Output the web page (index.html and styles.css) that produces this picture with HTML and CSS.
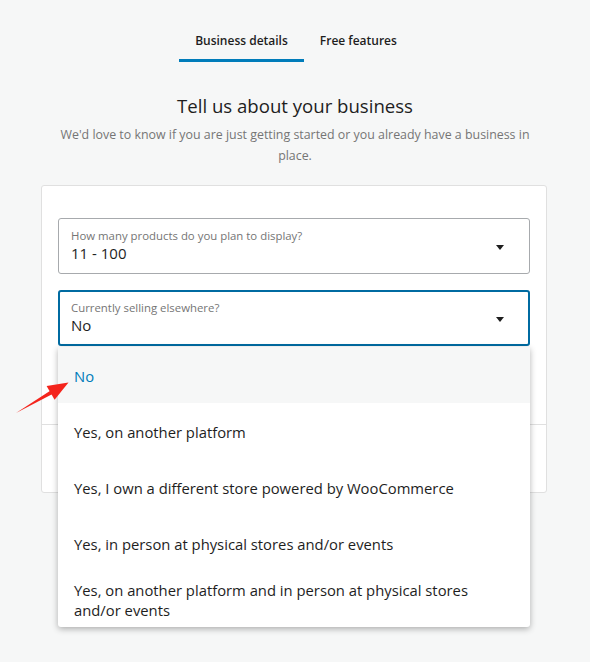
FILE: index.html
```
<!DOCTYPE html>
<html lang="en">
<head>
<meta charset="utf-8">
<title>Tell us about your business</title>
<link rel="stylesheet" href="styles.css">
</head>
<body>
<div class="page">
  <nav class="tabs">
    <div class="tab tab-active">Business details</div>
    <div class="tab">Free features</div>
  </nav>
  <h1 class="title">Tell us about your business</h1>
  <p class="subtitle">We'd love to know if you are just getting started or you already have a business in<br>place.</p>
  <div class="card">
    <div class="card-body">
      <div class="select">
        <div class="select-text">
          <div class="select-label">How many products do you plan to display?</div>
          <div class="select-value">11 - 100</div>
        </div>
        <span class="caret"></span>
      </div>
      <div class="select-wrap">
        <div class="select select-focused">
          <div class="select-text">
            <div class="select-label">Currently selling elsewhere?</div>
            <div class="select-value">No</div>
          </div>
          <span class="caret"></span>
        </div>
        <ul class="menu">
          <li class="option option-selected">No</li>
          <li class="option">Yes, on another platform</li>
          <li class="option">Yes, I own a different store powered by WooCommerce</li>
          <li class="option">Yes, in person at physical stores and/or events</li>
          <li class="option">Yes, on another platform and in person at physical stores and/or events</li>
        </ul>
      </div>
    </div>
    <div class="card-footer"></div>
  </div>
  <svg class="pointer" width="80" height="60" viewBox="0 0 80 60" aria-hidden="true">
    <path d="M16 53 L51 30.3 L53 33.7 Z" fill="#f4241c"/>
    <path d="M68.5 22.5 L46.6 26 L54.6 39.8 Z" fill="#f4241c"/>
  </svg>
</div>
</body>
</html>
```

FILE: styles.css
```
* { box-sizing: border-box; }
html, body { margin: 0; padding: 0; }
body {
  background: #f6f7f7;
  font-family: "Open Sans", "Noto Sans", sans-serif;
  color: #1e1e1e;
}
.page {
  position: relative;
  width: 590px;
  height: 662px;
  padding-top: 31px;
}
.tabs {
  display: flex;
  justify-content: center;
  padding-left: 2px;
}
.tab {
  padding: 0 16px 8px;
  font-size: 12px;
  line-height: 20px;
  font-weight: 600;
  color: #1e1e1e;
  border-bottom: 3px solid transparent;
}
.tab-active { border-bottom-color: #007cba; }
.title {
  margin: 30px 0 0;
  text-align: center;
  font-size: 18.6px;
  line-height: 28px;
  font-weight: 400;
  color: #1e1e1e;
}
.subtitle {
  margin: 4px 0 0;
  text-align: center;
  font-size: 12.4px;
  line-height: 21px;
  color: #757575;
}
.card {
  margin: 19px 43px 0 41px;
  background: #fff;
  border: 1px solid #e0e0e0;
  border-radius: 3px;
}
.card-body {
  padding: 32px 16px 0;
  height: 238px;
  display: flex;
  flex-direction: column;
  gap: 16px;
}
.card-footer {
  height: 68px;
  border-top: 1px solid #e0e0e0;
}
.select {
  height: 56px;
  display: flex;
  align-items: center;
  border: 1px solid #a7aaad;
  border-radius: 3px;
  padding: 0 25px 0 12px;
  background: #fff;
}
.select-focused {
  border: 2px solid #006ba1;
  padding: 0 24px 0 11px;
}
.select-text { flex: 1; padding-bottom: 1px; }
.select-label {
  font-size: 11.4px;
  line-height: 16px;
  color: #757575;
}
.select-value {
  font-size: 15px;
  line-height: 19px;
  color: #1e1e1e;
}
.caret {
  width: 0;
  height: 0;
  border-left: 4px solid transparent;
  border-right: 4px solid transparent;
  border-top: 5px solid #1e1e1e;
  margin-top: 2px;
}
.select-wrap { position: relative; }
.menu {
  position: absolute;
  top: calc(100% + 1px);
  left: 0;
  right: 0;
  margin: 0;
  padding: 0;
  list-style: none;
  background: #fff;
  border-radius: 0 0 3px 3px;
  box-shadow: 0 2px 6px rgba(0, 0, 0, 0.3);
  z-index: 2;
}
.option {
  min-height: 56px;
  display: flex;
  align-items: center;
  padding: 9px 16px 7px;
  font-size: 14.8px;
  line-height: 20px;
  color: #1e1e1e;
}
.option-selected {
  background: #f6f7f7;
  color: #007cba;
}
.pointer {
  position: absolute;
  left: 0;
  top: 360px;
  z-index: 3;
}
```
